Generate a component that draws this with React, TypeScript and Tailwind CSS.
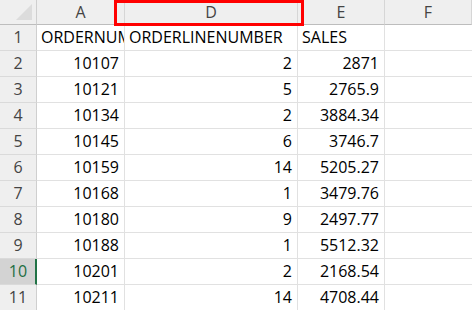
import React from 'react';

const rows: [string, string, string][] = [
  ['ORDERNUMBER', 'ORDERLINENUMBER', 'SALES'],
  ['10107', '2', '2871'],
  ['10121', '5', '2765.9'],
  ['10134', '2', '3884.34'],
  ['10145', '6', '3746.7'],
  ['10159', '14', '5205.27'],
  ['10168', '1', '3479.76'],
  ['10180', '9', '2497.77'],
  ['10188', '1', '5512.32'],
  ['10201', '2', '2168.54'],
  ['10211', '14', '4708.44'],
];

const cols = ['A', 'D', 'E', 'F'];

const App: React.FC = () => {
  return (
    <div className="relative w-[472px] h-[310px] overflow-hidden bg-white font-['Open_Sans',sans-serif] text-[16px] text-black">
      <div className="grid grid-cols-[37px_88px_173px_87px_1fr]">
        {/* column headers */}
        <div className="h-[25px] bg-[#efefef] border-b border-r border-b-[#bdbdbd] border-r-[#cfcfcf] flex items-end justify-end">
          <svg width="17" height="17" viewBox="0 0 17 17" className="mb-[3px] mr-[3px]">
            <polygon points="16,0 16,16 0,16" fill="#dcdcdc" />
          </svg>
        </div>
        {cols.map((c) => (
          <div
            key={c}
            className="h-[25px] bg-[#efefef] border-b border-r border-b-[#bdbdbd] border-r-[#d6d6d6] text-center leading-[24px] text-[#444444]"
          >
            {c}
          </div>
        ))}

        {rows.map((r, i) => {
          const selected = i === 9;
          const isText = i === 0;
          return (
            <React.Fragment key={i}>
              <div
                className={`h-[26px] border-b border-b-[#dadada] text-center leading-[25px] ${
                  selected
                    ? 'bg-[#d3d3d3] text-[#1e6e42] border-r-2 border-r-[#217346] pl-[1px]'
                    : 'bg-[#efefef] text-[#444444] border-r border-r-[#cfcfcf]'
                }`}
              >
                {i + 1}
              </div>
              {r.map((v, j) => (
                <div
                  key={j}
                  className={`h-[26px] border-b border-r border-[#e1e1e1] leading-[25px] whitespace-nowrap overflow-hidden ${
                    isText ? 'pl-[4px] text-left' : 'pr-[5px] text-right'
                  }`}
                >
                  {v}
                </div>
              ))}
              <div className="h-[26px] border-b border-[#e1e1e1]" />
            </React.Fragment>
          );
        })}
      </div>

      {/* red highlight around column D header */}
      <div className="absolute left-[114px] top-0 w-[190px] h-[26px] border-[3px] border-[#ff0000]" />
    </div>
  );
};

export default App;
